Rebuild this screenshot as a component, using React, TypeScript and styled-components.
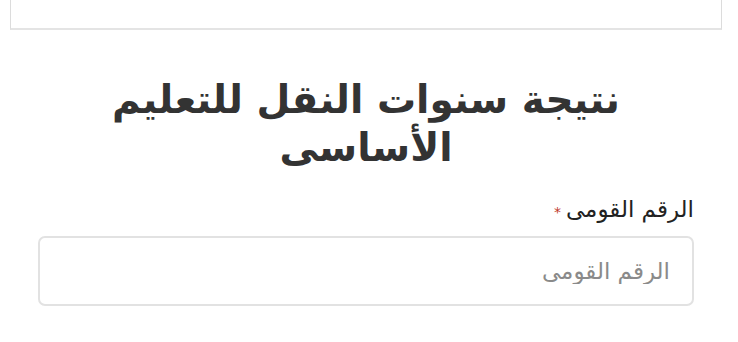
import styled, { createGlobalStyle } from "styled-components"

const GlobalStyle = createGlobalStyle`
    html, body {
        margin:0;
        padding:0;
        background:#ffffff;
    }
    body {
        font-family:"DejaVu Sans", "Noto Sans", sans-serif;
        direction:rtl;
    }
`

const Page = styled.div`
    width:738px;
    height:342px;
    overflow:hidden;
    box-sizing:border-box;
    padding:0 16px 0 10px;
`

const TopCard = styled.div`
    height:30px;
    margin-top:-2px;
    border:1px solid #dcdcdc;
    border-top:none;
    border-bottom:2px solid #e4e4e4;
    background:#fff;
`

const Title = styled.h1`
    margin:46px 0 0 0;
    text-align:center;
    font-size:39px;
    line-height:48px;
    font-weight:bold;
    color:#333333;
    padding:0 80px;
`

const Form = styled.div`
    margin:21px 28px 0 28px;
`

const Label = styled.label`
    display:block;
    font-size:23px;
    color:#222;
    line-height:32px;
`

const Star = styled.span`
    color:#c0392b;
    font-size:14px;
    margin-right:5px;
`

const Input = styled.input`
    display:block;
    box-sizing:border-box;
    width:100%;
    height:70px;
    margin-top:8px;
    padding:0 22px;
    border:2px solid #e2e2e2;
    border-radius:7px;
    font-family:"DejaVu Sans", sans-serif;
    font-size:23px;
    direction:rtl;
    outline:none;
    &::placeholder {
        color:#8a8a8a;
    }
`

export default function App() {
    return (
        <Page>
            <GlobalStyle />
            <TopCard />
            <Title>نتيجة سنوات النقل للتعليم الأساسى</Title>
            <Form>
                <Label>الرقم القومى<Star>*</Star></Label>
                <Input placeholder="الرقم القومى" />
            </Form>
        </Page>
    )
}
